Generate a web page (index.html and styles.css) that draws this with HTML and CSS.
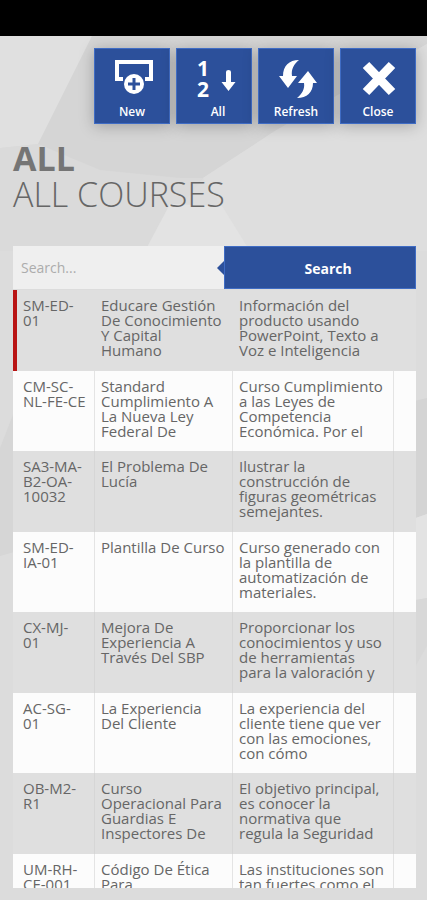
FILE: index.html
```
<!DOCTYPE html>
<html lang="en">
<head>
    <meta charset="UTF-8">
    <meta name="viewport" content="width=device-width, initial-scale=1">
    <title>All Courses</title>
    <link rel="stylesheet" href="styles.css">
</head>
<body>

    <div class="status-bar"></div>

    <main class="page">
        <svg class="backdrop" viewBox="0 0 427 864" preserveAspectRatio="none" aria-hidden="true">
            <rect width="427" height="864" fill="#dcdcdc"/>
            <polygon points="0,0 92,0 38,108 0,112" fill="#e0e0e0"/>
            <polygon points="92,0 427,0 427,8 275,95 203,142 170,178 90,132 38,108" fill="#d5d5d5"/>
            <polygon points="38,108 100,134 180,142 203,142 145,215 0,215 0,112" fill="#dadada"/>
            <polygon points="203,142 275,95 427,8 427,215 250,215" fill="#dedede"/>
            <polygon points="170,168 222,170 250,215 145,215" fill="#e3e3e3"/>
            <polygon points="14,376 0,412 0,520 14,516" fill="#d6d6d6"/>
            <polygon points="427,362 410,366 410,484 427,478" fill="#d4d4d4"/>
            <polygon points="427,478 410,484 410,565 427,562" fill="#e3e3e3"/>
            <polygon points="427,562 410,565 410,640 427,610" fill="#d8d8d8"/>
        </svg>

        <nav class="toolbar">
            <button class="tile" type="button">
                <svg class="tile-icon" viewBox="0 0 44 40" aria-hidden="true">
                    <path d="M13 20H7V3h34v17h-6" fill="none" stroke="#fff" stroke-width="4"/>
                    <circle cx="24" cy="25" r="10" fill="#fff"/>
                    <path d="M24 19v12M18 25h12" stroke="#2c509b" stroke-width="3"/>
                </svg>
                New
            </button>
            <button class="tile tile-sort" type="button">
                <svg class="tile-icon" viewBox="0 0 44 40" aria-hidden="true">
                    <text class="digit" x="1" y="17">1</text>
                    <text class="digit" x="1" y="38">2</text>
                    <path d="M30 13q0-2 2.500-2t2.500 2v10h4.500L32.500 32 25.500 23H30z" fill="#fff"/>
                </svg>
                All
            </button>
            <button class="tile" type="button">
                <svg class="tile-icon" viewBox="0 0 44 40" aria-hidden="true">
                    <path d="M25 1C15 1 9 7 9 17H5l9 12 9-12h-5C17 10 20 5 25 1z" fill="#fff"/>
                    <path d="M23 39c10 0 16-6 16-15h4l-9-12-10 12h6c1 6-2 11-7 15z" fill="#fff"/>
                </svg>
                Refresh
            </button>
            <button class="tile" type="button">
                <svg class="tile-icon" viewBox="0 0 44 40" aria-hidden="true">
                    <path d="M10 6l26 27M36 6L10 33" stroke="#fff" stroke-width="9"/>
                </svg>
                Close
            </button>
        </nav>

        <h1 class="title">
            <strong>ALL</strong>
            <span>ALL COURSES</span>
        </h1>

        <form class="search">
            <input class="search-input" type="text" placeholder="Search..." aria-label="Search courses">
            <button class="search-button" type="button">Search</button>
        </form>

        <div class="list">
            <table class="courses">
                <colgroup>
                    <col class="col-code">
                    <col class="col-name">
                    <col class="col-desc">
                    <col>
                </colgroup>
                <tbody>
                    <tr class="selected">
                        <td>SM-ED-<br>01</td>
                        <td>Educare Gestión<br>De Conocimiento<br>Y Capital<br>Humano</td>
                        <td>Información del<br>producto usando<br>PowerPoint, Texto a<br>Voz e Inteligencia</td>
                        <td></td>
                    </tr>
                    <tr>
                        <td>CM-SC-<br>NL-FE-CE</td>
                        <td>Standard<br>Cumplimiento A<br>La Nueva Ley<br>Federal De</td>
                        <td>Curso Cumplimiento<br>a las Leyes de<br>Competencia<br>Económica. Por el</td>
                        <td></td>
                    </tr>
                    <tr>
                        <td>SA3-MA-<br>B2-OA-<br>10032</td>
                        <td>El Problema De<br>Lucía</td>
                        <td>Ilustrar la<br>construcción de<br>figuras geométricas<br>semejantes.</td>
                        <td></td>
                    </tr>
                    <tr>
                        <td>SM-ED-<br>IA-01</td>
                        <td>Plantilla De Curso</td>
                        <td>Curso generado con<br>la plantilla de<br>automatización de<br>materiales.</td>
                        <td></td>
                    </tr>
                    <tr>
                        <td>CX-MJ-<br>01</td>
                        <td>Mejora De<br>Experiencia A<br>Través Del SBP</td>
                        <td>Proporcionar los<br>conocimientos y uso<br>de herramientas<br>para la valoración y</td>
                        <td></td>
                    </tr>
                    <tr>
                        <td>AC-SG-<br>01</td>
                        <td>La Experiencia<br>Del Cliente</td>
                        <td>La experiencia del<br>cliente tiene que ver<br>con las emociones,<br>con cómo</td>
                        <td></td>
                    </tr>
                    <tr>
                        <td>OB-M2-<br>R1</td>
                        <td>Curso<br>Operacional Para<br>Guardias E<br>Inspectores De</td>
                        <td>El objetivo principal,<br>es conocer la<br>normativa que<br>regula la Seguridad</td>
                        <td></td>
                    </tr>
                    <tr>
                        <td>UM-RH-<br>CE-001</td>
                        <td>Código De Ética<br>Para</td>
                        <td>Las instituciones son<br>tan fuertes como el</td>
                        <td></td>
                    </tr>
                </tbody>
            </table>
        </div>
    </main>

</body>
</html>
```
FILE: styles.css
```
* {
    box-sizing: border-box;
}

body {
    margin: 0;
    height: 100vh;
    display: flex;
    flex-direction: column;
    overflow: hidden;
    color: #666;
    font-family: "Open Sans", "Noto Sans", sans-serif;
}

button, input {
    font-family: inherit;
}

.status-bar {
    flex: none;
    height: 36px;
    background-color: #000;
}

.page {
    position: relative;
    flex: 1;
    min-height: 0;
    display: flex;
    flex-direction: column;
    padding: 12px 11px 12px 13px;
}

.backdrop {
    position: absolute;
    inset: 0;
    z-index: -1;
    width: 100%;
    height: 100%;
}

.toolbar {
    display: flex;
    justify-content: flex-end;
    gap: 6px;
}

.tile {
    display: flex;
    flex-direction: column;
    align-items: center;
    width: 76px;
    height: 76px;
    padding: 10px 0 0;
    border: 1px solid #3f6cc4;
    background-color: #2c509b;
    color: #fff;
    font-size: 12px;
    font-weight: 600;
    line-height: 16px;
    box-shadow: 0 2px 14px rgba(0, 0, 0, 0.25);
    cursor: pointer;
}

.tile-sort {
    padding-left: 8px;
}

.tile-icon {
    width: 44px;
    height: 40px;
    margin-bottom: 5px;
    overflow: visible;
}

.digit {
    fill: #fff;
    font-size: 21px;
    font-weight: 700;
}

.title {
    margin: 16px 0 0;
    font-size: 34px;
    font-weight: 300;
    line-height: 36px;
}

.title strong, .title span {
    display: block;
}

.title strong {
    color: #757575;
    font-weight: 700;
}

.search {
    display: grid;
    grid-template-columns: 11fr 10fr;
    margin: 34px 0 1px;
}

.search-input {
    min-width: 0;
    height: 43px;
    padding: 0 8px;
    border: 0;
    background-color: #efefef;
    color: #666;
    font-size: 14px;
}

.search-input::placeholder {
    color: #acacac;
}

.search-button {
    position: relative;
    height: 43px;
    padding: 2px 0 0 16px;
    border: 1px solid #3f6cc4;
    background-color: #2c509b;
    color: #fff;
    font-size: 14px;
    font-weight: 700;
    cursor: pointer;
}

/* arrow pointing at the input */
.search-button::before {
    content: "";
    position: absolute;
    top: 14px;
    left: -8px;
    border: 7px solid transparent;
    border-left: 0;
    border-right-color: #2c509b;
}

.list {
    flex: 1;
    min-height: 0;
    overflow: hidden;
}

.courses {
    width: 100%;
    table-layout: fixed;
    border-collapse: separate;
    border-spacing: 0;
    font-size: 15px;
    font-weight: 500;
    line-height: 15px;
}

.col-code {
    width: 82px;
}

.col-name {
    width: 138px;
}

.col-desc {
    width: 161px;
}

.courses td {
    height: 80px;
    padding: 8px 6px 10px;
    border-right: 1px solid #e4e4e4;
    vertical-align: top;
    white-space: nowrap;
    background-color: #fcfcfc;
}

.courses td:first-child {
    border-left: 4px solid transparent;
}

.courses td:last-child {
    border-right: 0;
}

.courses tr:nth-child(odd) td {
    height: 81px;
    border-right-color: #d6d6d6;
    background-color: #dfdfdf;
}

.courses .selected td:first-child {
    border-left-color: #b81414;
}

.courses tr.selected td {
    border-right-color: #dfdfdf;
}
```
